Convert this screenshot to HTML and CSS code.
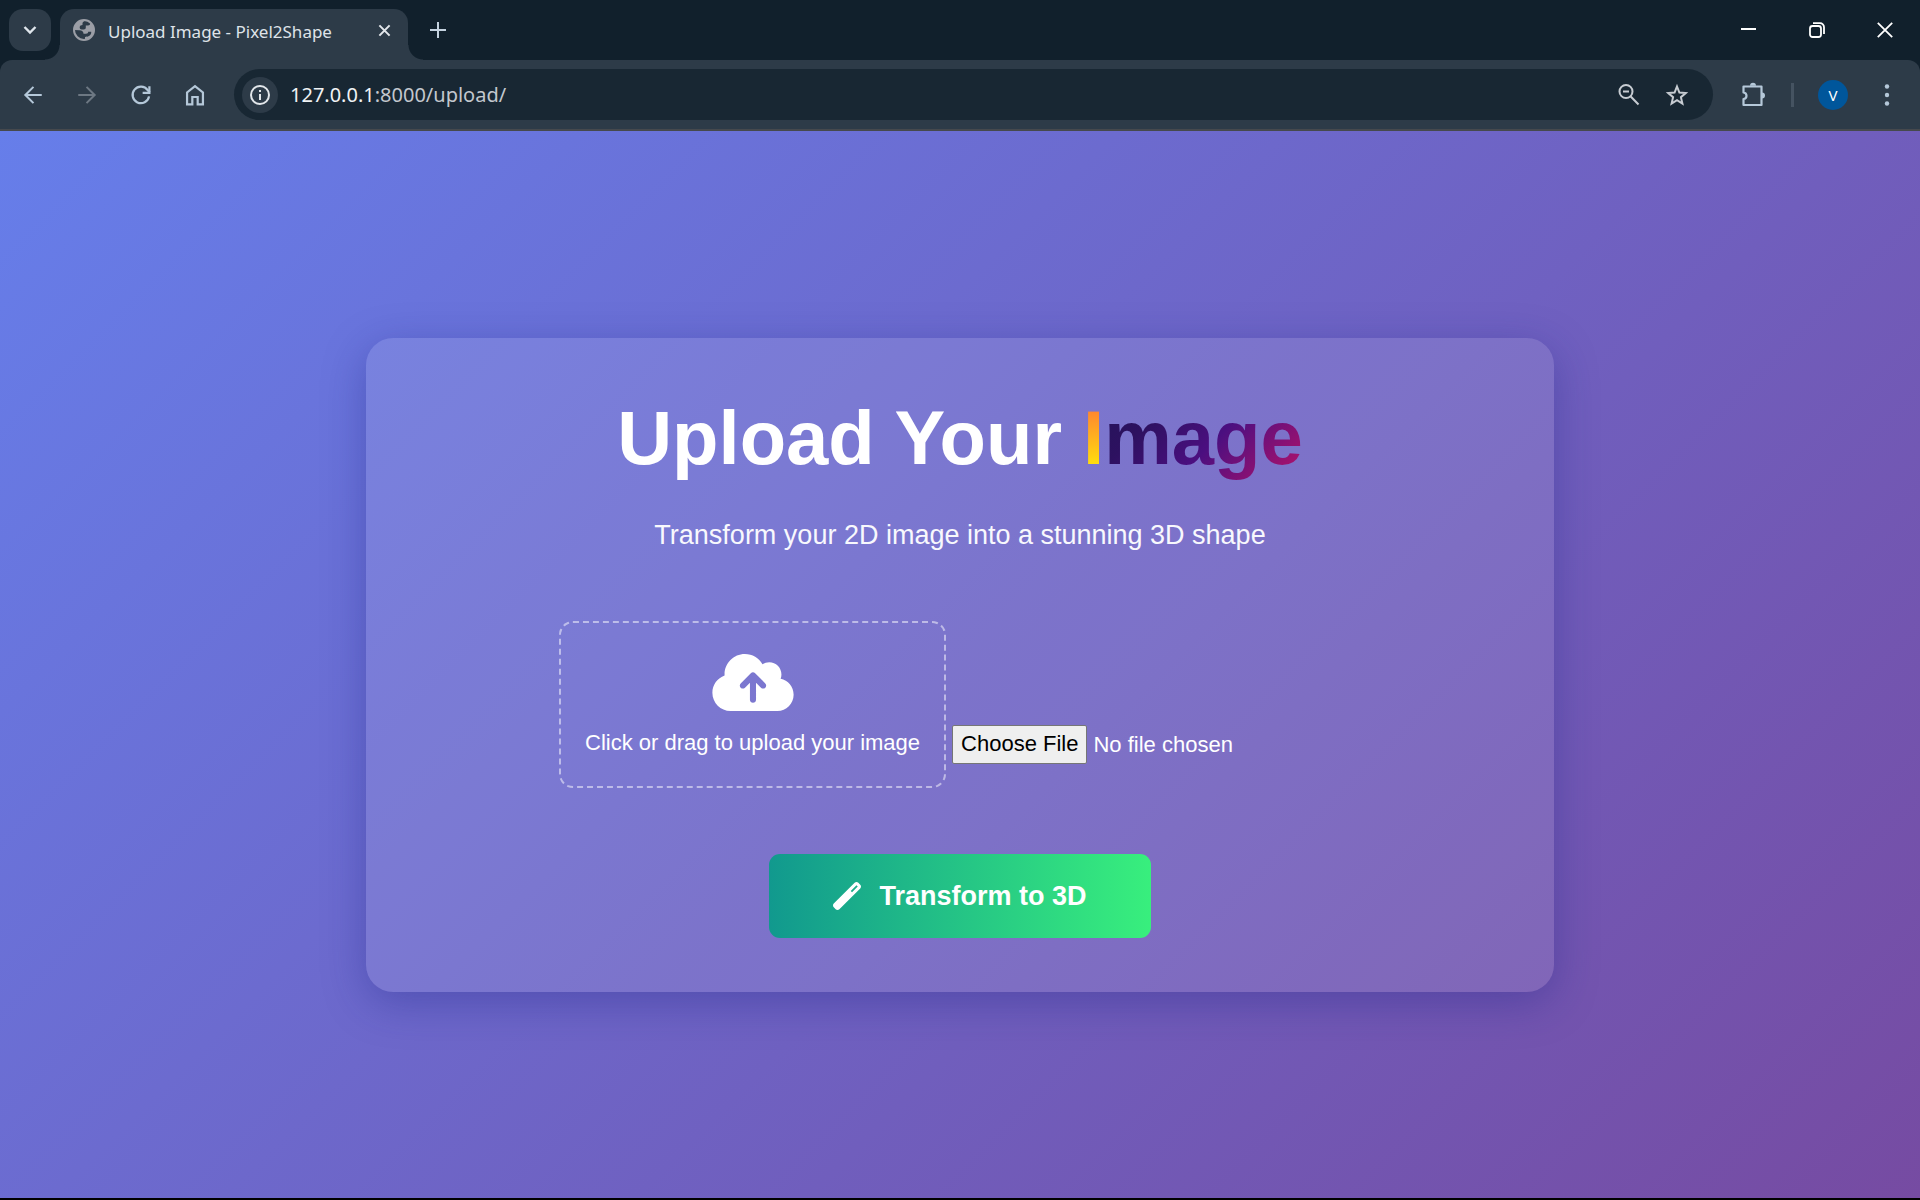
FILE: index.html
```html
<!DOCTYPE html>
<html lang="en">
<head>
  <meta charset="utf-8">
  <title>Upload Image - Pixel2Shape</title>
  <link rel="stylesheet" href="styles.css">
</head>
<body>
  <header class="browser">
    <div class="tabstrip">
      <button class="tab-search" aria-label="Search tabs">
        <svg width="20" height="20" viewBox="0 0 20 20" fill="none" stroke="currentColor" stroke-width="2.4"><path d="M4.5 7l5.5 5.5L15.500 7"/></svg>
      </button>
      <div class="tab">
        <svg class="favicon" width="22" height="22" viewBox="0 0 22 22"><circle cx="11" cy="11" r="10" fill="none" stroke="currentColor" stroke-width="2"/><path fill="currentColor" d="M9 1.500C4 2 1.200 6.500 1.200 11l5.300.2c2.500.1 4 1.300 4 3.600H13c1.400 0 2.200-.8 2.200-2h3c.5 3.500-3.200 5.200-6.200 5.200v3.200l4-1.200 4-4.500.9-5-1.100-3.700-2.600-3.300c.3 2-.6 3-2.200 3h-2.200v2c0 1.200-.7 2-2 2H8.700c-1.200 0-2-.8-2-2C6.700 6.700 8 6 9.500 6V4.500c0-1.200.8-2 2.300-2.200z"/></svg>
        <span class="tab-title">Upload Image - Pixel2Shape</span>
        <button class="tab-close" aria-label="Close tab">
          <svg width="13" height="13" viewBox="0 0 14 14" stroke="currentColor" stroke-width="2.2"><path d="M1.500 1.500l11 11M12.500 1.500l-11 11"/></svg>
        </button>
      </div>
      <button class="new-tab" aria-label="New tab">
        <svg width="16" height="16" viewBox="0 0 16 16" stroke="currentColor" stroke-width="2"><path d="M8 0v16M0 8h16"/></svg>
      </button>
      <div class="window-controls">
        <button aria-label="Minimize"><svg width="16" height="16" viewBox="0 0 16 16" stroke="currentColor" stroke-width="2"><path d="M0 7h15"/></svg></button>
        <button aria-label="Restore"><svg width="16" height="16" viewBox="0 0 16 16" fill="none" stroke="currentColor" stroke-width="1.800"><rect x="1" y="4" width="11" height="11" rx="2.500"/><path d="M4 1.200h7a4 4 0 0 1 4 4V12"/></svg></button>
        <button aria-label="Close"><svg width="16" height="16" viewBox="0 0 16 16" stroke="currentColor" stroke-width="1.800"><path d="M.8.8l14.400 14.400M15.200.8L.8 15.200"/></svg></button>
      </div>
    </div>
    <div class="toolbar">
      <nav class="nav-buttons" aria-label="Navigation">
        <button aria-label="Back"><svg width="28" height="28" viewBox="0 0 24 24" fill="currentColor"><path d="M19.500 11.100H7.600l5.400-5.500L11.800 4.400l-7.600 7.600 7.600 7.600 1.200-1.200-5.400-5.500h11.900z"/></svg></button>
        <button class="is-disabled" aria-label="Forward"><svg width="28" height="28" viewBox="0 0 24 24" fill="currentColor"><path d="M4.500 11.100h11.900L11 5.600l1.200-1.200 7.600 7.600-7.600 7.600-1.200-1.200 5.400-5.500H4.500z"/></svg></button>
        <button aria-label="Reload"><svg width="28" height="28" viewBox="0 0 24 24" fill="none" stroke="currentColor" stroke-width="1.900"><path d="M18.900 13.200A7.100 7.100 0 1 1 17.700 7.800l1.800 2"/><path d="M19.200 4.500v5.700h-5.800"/></svg></button>
        <button aria-label="Home"><svg width="28" height="28" viewBox="0 0 24 24" fill="none" stroke="currentColor" stroke-width="1.900"><path d="M5.200 20V9.800L12 4.500l6.800 5.300V20h-4.500v-6.300H9.700V20z"/></svg></button>
      </nav>
      <div class="omnibox">
        <button class="site-info" aria-label="View site information">
          <svg width="22" height="22" viewBox="0 0 22 22"><circle cx="11" cy="11" r="9" fill="none" stroke="currentColor" stroke-width="2"/><path d="M11 10v6M11 6v2" stroke="currentColor" stroke-width="2"/></svg>
        </button>
        <span class="url"><span class="host">127.0.0.1</span>:8000/upload/</span>
        <button class="omni-action" aria-label="Zoom">
          <svg width="24" height="24" viewBox="0 0 24 24" fill="none" stroke="currentColor" stroke-width="2"><circle cx="9" cy="8.500" r="6.500"/><path d="M13.500 13.200l8 8.300M6 8.500h6"/></svg>
        </button>
        <button class="omni-action" aria-label="Bookmark this tab">
          <svg width="24" height="24" viewBox="0 0 24 24" fill="none" stroke="currentColor" stroke-width="2"><path d="M12 3.500l2.400 6 6.400.5-4.900 4.200 1.500 6.300L12 17.100l-5.400 3.400 1.500-6.300L3.200 10l6.400-.5z"/></svg>
        </button>
      </div>
      <div class="toolbar-end">
        <button aria-label="Extensions"><svg width="26" height="26" viewBox="0 0 26 26"><path d="M5 4.500h16.500v18.500H3.500v-6c4-.4 4-6 0-6.500v-6z" fill="none" stroke="currentColor" stroke-width="2.200" stroke-linejoin="round"/><path d="M10 3.800a3 3 0 0 1 6 0zM22 10.500a3 3 0 0 1 0 6z" fill="currentColor"/></svg></button>
        <span class="divider"></span>
        <button class="avatar" aria-label="Profile">V</button>
        <button aria-label="Menu"><svg width="26" height="26" viewBox="0 0 26 26" fill="currentColor"><circle cx="13" cy="4.500" r="2.200"/><circle cx="13" cy="13" r="2.200"/><circle cx="13" cy="21.500" r="2.200"/></svg></button>
      </div>
    </div>
  </header>

  <main class="page">
    <section class="card">
      <h1 class="title">Upload Your <span class="accent"><span class="accent-first">I</span><span class="accent-rest">mage</span></span></h1>
      <p class="subtitle">Transform your 2D image into a stunning 3D shape</p>
      <form class="upload-form">
        <div class="picker">
          <label class="dropzone" for="image">
            <svg width="82" height="65" viewBox="0 0 640 512" fill="currentColor"><path d="M144 480C64.500 480 0 415.500 0 336c0-62.800 40.200-116.200 96.200-135.900c-.1-2.700-.2-5.400-.2-8.100c0-88.400 71.600-160 160-160c59.300 0 111 32.200 138.700 80.200C409.900 102 428.300 96 448 96c53 0 96 43 96 96c0 12.200-2.300 23.800-6.400 34.600C596 238.400 640 290.100 640 352c0 70.700-57.300 128-128 128H144zm79-217c-9.400 9.400-9.400 24.600 0 33.900s24.600 9.400 33.900 0l39-39V392c0 13.300 10.700 24 24 24s24-10.700 24-24V257.900l39 39c9.400 9.400 24.600 9.400 33.900 0s9.400-24.600 0-33.900l-80-80c-9.400-9.400-24.600-9.400-33.900 0l-80 80z"/></svg>
            <span>Click or drag to upload your image</span>
          </label>
          <input class="file" type="file" id="image" name="image" accept="image/*">
        </div>
        <button class="submit" type="submit">
          <svg width="28" height="28" viewBox="0 0 512 512" fill="currentColor"><path d="M14.100 463.300c-18.700-18.700-18.700-49.100 0-67.900L395.400 14.100c18.700-18.700 49.100-18.700 67.900 0l34.600 34.600c18.700 18.700 18.700 49.100 0 67.900L116.500 497.900c-18.700 18.700-49.100 18.700-67.900 0L14.100 463.300zM347.600 187.600l105-105L429.400 59.300l-105 105 23.300 23.300z"/></svg>
          <span>Transform to 3D</span>
        </button>
      </form>
    </section>
  </main>
</body>
</html>
```

FILE: styles.css
```css
* {
  box-sizing: border-box;
}

body {
  margin: 0;
  min-height: 100vh;
  display: flex;
  flex-direction: column;
  font-family: "Liberation Sans", Arial, sans-serif;
  color: #fff;
  border-bottom: 2px solid #000;
}

button {
  display: flex;
  align-items: center;
  justify-content: center;
  padding: 0;
  border: 0;
  background: none;
  color: inherit;
  font: inherit;
}

/* Browser frame */
.browser {
  background: #11202c;
  font-family: "Noto Sans", "Open Sans", sans-serif;
}

.tabstrip {
  display: flex;
  height: 60px;
  padding: 9px 0 0 9px;
}

.tab-search {
  width: 42px;
  height: 42px;
  margin-right: 9px;
  border-radius: 14px;
  background: #2d3b48;
  color: #dfe6ec;
}

.tab {
  position: relative;
  display: flex;
  align-items: center;
  width: 348px;
  padding: 0 16px 9px 13px;
  border-radius: 14px 14px 0 0;
  background: #2d3b48;
}

.tab::before,
.tab::after {
  content: "";
  position: absolute;
  bottom: 0;
  width: 15px;
  height: 15px;
}

.tab::before {
  right: 100%;
  background: radial-gradient(circle at 0 0, transparent 14px, #2d3b48 15px);
}

.tab::after {
  left: 100%;
  background: radial-gradient(circle at 100% 0, transparent 14px, #2d3b48 15px);
}

.favicon {
  margin-right: 13px;
  color: #9b9ea6;
}

.tab-title {
  flex: 1;
  padding-top: 3px;
  font-size: 17px;
  line-height: 24px;
  white-space: nowrap;
  color: #dfe3e8;
}

.tab-close {
  width: 16px;
  color: #e3e7eb;
}

.new-tab {
  width: 42px;
  height: 42px;
  margin-left: 9px;
  color: #c4d2df;
}

.window-controls {
  display: flex;
  height: 42px;
  margin-left: auto;
  padding-right: 1px;
}

.window-controls button {
  width: 68px;
}

.toolbar {
  display: flex;
  align-items: center;
  height: 71px;
  padding: 0 6px;
  border-bottom: 2px solid #46494d;
  border-radius: 12px 12px 0 0;
  background: #2d3b48;
  color: #b5c8d9;
}

.nav-buttons {
  display: flex;
  margin-right: 12px;
}

.nav-buttons button {
  width: 54px;
  height: 42px;
}

.nav-buttons .is-disabled {
  color: #6d7883;
}

.omnibox {
  display: flex;
  flex: 1;
  align-items: center;
  height: 51px;
  padding: 0 12px 0 8px;
  border-radius: 26px;
  background: #182733;
  color: #c7ccd2;
}

.site-info {
  width: 36px;
  height: 36px;
  margin-right: 12px;
  border-radius: 18px;
  background: #2d3b48;
  color: #e3e7eb;
}

.url {
  flex: 1;
  font-size: 20px;
  line-height: 28px;
  color: #c3c8ce;
}

.host {
  color: #f0f3f5;
}

.omni-action {
  width: 48px;
  height: 42px;
}

.toolbar-end {
  display: flex;
  align-items: center;
  margin-left: 13px;
}

.toolbar-end button {
  width: 54px;
  height: 42px;
}

.divider {
  width: 3px;
  height: 24px;
  margin: 0 24px 0 11px;
  background: #455361;
}

.toolbar-end .avatar {
  width: 30px;
  height: 30px;
  margin-right: 12px;
  border-radius: 15px;
  background: #00569b;
  color: #fff;
  font-size: 15px;
}

/* Upload page */
.page {
  display: flex;
  flex: 1;
  align-items: center;
  justify-content: center;
  padding: 27px;
  background: linear-gradient(135deg, #667eea 0%, #764ba2 100%);
}

.card {
  width: 100%;
  max-width: 1188px;
  padding: 54px;
  border-radius: 27px;
  background: rgba(255, 255, 255, 0.1);
  box-shadow: 0 11px 43px rgba(31, 38, 135, 0.37);
  text-align: center;
}

.title {
  margin: 0 0 32px;
  font-size: 76px;
  line-height: 91px;
}

.accent-first,
.accent-rest {
  -webkit-background-clip: text;
  background-clip: text;
  color: transparent;
}

.accent-first {
  background-image: linear-gradient(180deg, #ff8630 18%, #ffdb0d 80%);
}

.accent-rest {
  background-image: linear-gradient(135deg, #24145a 0%, #2d1160 25%, #4b0f80 55%, #b8126a 100%);
}

.subtitle {
  margin: 0 0 66px;
  font-size: 27px;
  line-height: 40px;
  color: #f8f8fd;
}

.upload-form {
  display: flex;
  flex-direction: column;
  align-items: center;
  max-width: 802px;
  margin: 0 auto;
  gap: 66px;
}

.picker {
  display: flex;
  align-items: flex-end;
  align-self: stretch;
  gap: 6px;
}

.dropzone {
  display: flex;
  flex-direction: column;
  align-items: center;
  gap: 12px;
  padding: 27px 24px;
  border: 2px dashed rgba(255, 255, 255, 0.5);
  border-radius: 14px;
  font-size: 22px;
  line-height: 32px;
  white-space: nowrap;
}

.file {
  flex: 1;
  min-width: 0;
  margin-bottom: 24px;
  color: #fff;
  font: 22px "Liberation Sans", Arial, sans-serif;
}

.file::file-selector-button {
  height: 39px;
  margin: 0 6px 0 0;
  padding: 0 8px;
  border: 1px solid #767676;
  border-radius: 2px;
  background: #efefef;
  color: #000;
  font: inherit;
}

.submit {
  gap: 18px;
  padding: 26px 64px;
  border-radius: 11px;
  background: linear-gradient(90deg, #11998e, #38ef7d);
  font-size: 27px;
  font-weight: 700;
  line-height: 32px;
}
```
